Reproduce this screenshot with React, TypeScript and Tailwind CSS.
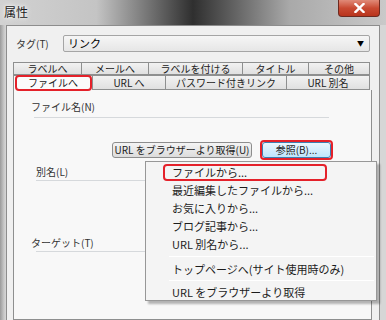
import React from "react";

const font = { fontFamily: '"Noto Sans CJK JP", "Noto Sans", sans-serif' };

const row1 = [
  { label: "ラベルへ", w: "w-[69px]" },
  { label: "メールへ", w: "w-[67px]" },
  { label: "ラベルを付ける", w: "w-[94px]" },
  { label: "タイトル", w: "w-[66px]" },
  { label: "その他", w: "w-[61px]" },
];

const row2 = [
  { label: "URL へ", w: "w-[73px]" },
  { label: "パスワード付きリンク", w: "w-[121px]" },
  { label: "URL 別名", w: "w-[83px]" },
];

const menuTop = [
  "最近編集したファイルから...",
  "お気に入りから...",
  "ブログ記事から...",
  "URL 別名から...",
];

function Tab({ label, w, h }: { label: string; w: string; h: string }) {
  return (
    <div
      className={`${w} ${h} flex items-center justify-center whitespace-nowrap border border-l-0 first:border-l border-[#8e8f8f] bg-gradient-to-b from-[#f2f2f2] to-[#e0e0e0] text-[10px] leading-none text-[#222]`}
    >
      {label}
    </div>
  );
}

export default function App() {
  return (
    <div className="relative w-[386px] h-[320px] overflow-hidden bg-[#b9b9b9] text-black whitespace-nowrap" style={font}>
      {/* title bar */}
      <div className="h-[25px] flex items-start bg-[linear-gradient(90deg,#d2d2d2_0%,#c4c4c4_25%,#6b6b6b_40%,#2f2f2f_50%,#5f5f5f_60%,#a9a9a9_75%,#c9c9c9_100%)]">
        <span className="ml-[4px] mt-[4px] text-[12px] leading-[16px] text-[#1a1a1a] [text-shadow:0_0_6px_#fff,0_0_3px_#fff]">属性</span>
        <div className="ml-auto mr-[6px] w-[42px] h-[17px] rounded-b-[4px] border border-t-0 border-[#6d2a20] bg-gradient-to-b from-[#e08a78] via-[#c94a32] to-[#b8341c] flex items-center justify-center">
          <svg width="11" height="10" viewBox="0 0 11 10">
            <path d="M1.5 1 L9.5 9 M9.5 1 L1.5 9" stroke="#fff" strokeWidth="2.4" strokeLinecap="square" />
          </svg>
        </div>
      </div>

      {/* window body */}
      <div className="flex h-[295px] bg-[linear-gradient(90deg,#9a9a9a_0px,#c8c8c8_4px,#d6d6d6_6px)]">
        <div className="ml-[6px] w-[374px] border-l border-t border-r border-[#8d8d8d] bg-[#f0f0f0]">
          {/* tag row */}
          <div className="mt-[9px] flex items-center h-[17px]">
            <span className="ml-[9px] w-[47px] text-[10px] text-[#333]">タグ(T)</span>
            <div className="w-[307px] h-[17px] rounded-[2px] border border-[#a5a5a5] bg-gradient-to-b from-[#f6f6f6] to-[#e6e6e6] flex items-center">
              <span className="ml-[4px] text-[11px] leading-none">リンク</span>
              <span className="ml-auto mr-[5px] text-[7px] leading-none">▼</span>
            </div>
          </div>

          {/* tabs */}
          <div className="ml-[6px] mt-[10px] w-[359px]">
            <div className="flex">
              {row1.map((t) => (
                <Tab key={t.label} label={t.label} w={t.w} h="h-[13px]" />
              ))}
            </div>
            <div className="flex">
              <div className="relative w-[80px] h-[15px] flex items-center justify-center border border-b-0 border-[#8e8f8f] bg-[#fbfbfb] text-[10px] leading-none text-[#222]">
                ファイルへ
                <div className="absolute left-[1px] top-[-1px] w-[77px] h-[16px] rounded-[4px] border-2 border-[#e4212a]" />
              </div>
              {row2.map((t) => (
                <Tab key={t.label} label={t.label} w={t.w} h="h-[15px]" />
              ))}
            </div>

            {/* panel */}
            <div className="h-[230px] border border-t-0 border-[#8e8f8f] bg-[#f8f8f8]">
              <div className="pt-[9px] pl-[17px] text-[10px] leading-[15px] text-[#333]">ファイル名(N)</div>
              <div className="ml-[20px] mt-[3px] w-[295px] h-px bg-[#d6d9dc]" />

              <div className="mt-[24px] flex items-center">
                <div className="ml-[98px] w-[140px] h-[16px] rounded-[3px] border border-[#8d8d8d] bg-gradient-to-b from-[#f4f4f4] to-[#dcdcdc] flex items-center justify-center text-[10px] leading-none text-[#222]">
                  URL をブラウザーより取得(U)
                </div>
                <div className="relative ml-[10px] w-[69px] h-[16px] rounded-[3px] border border-[#3c7fb1] bg-gradient-to-b from-[#eaf6fd] to-[#bee6fd] flex items-center justify-center text-[10px] leading-none text-[#222]">
                  参照(B)...
                  <div className="absolute left-[-3px] top-[-3px] w-[73px] h-[20px] rounded-[4px] border-2 border-[#e4212a]" />
                </div>
              </div>

              <div className="mt-[6px] pl-[22px] text-[10px] leading-[15px] text-[#333]">別名(L)</div>
              <div className="ml-[22px] mt-[1px] w-[295px] h-px bg-[#d6d9dc]" />

              <div className="mt-[54px] pl-[17px] text-[10px] leading-[15px] text-[#333]">ターゲット(T)</div>
              <div className="ml-[22px] mt-[1px] w-[295px] h-px bg-[#d6d9dc]" />
            </div>
          </div>
        </div>
      </div>

      {/* context menu */}
      <div className="absolute left-[145px] top-[161px] w-[232px] h-[140px] border border-[#979797] bg-[#f4f4f4] shadow-[3px_3px_2px_rgba(0,0,0,0.28)] text-[11px] leading-none text-[#1c1c1c]">
        <div className="relative h-[18px] mt-px flex items-center pl-[26px]">
          ファイルから...
          <div className="absolute left-[17px] top-[1px] w-[164px] h-[17px] rounded-[4px] border-2 border-[#e4212a]" />
        </div>
        {menuTop.map((m) => (
          <div key={m} className="h-[18px] flex items-center pl-[26px]">
            {m}
          </div>
        ))}
        <div className="ml-[23px] mr-[2px] my-[3px] h-px bg-[#e0e0e0] border-b border-white" />
        <div className="h-[18px] flex items-center pl-[26px]">トップページへ(サイト使用時のみ)</div>
        <div className="ml-[23px] mr-[2px] my-[2px] h-px bg-[#e0e0e0] border-b border-white" />
        <div className="h-[18px] flex items-center pl-[26px]">URL をブラウザーより取得</div>
      </div>
    </div>
  );
}
